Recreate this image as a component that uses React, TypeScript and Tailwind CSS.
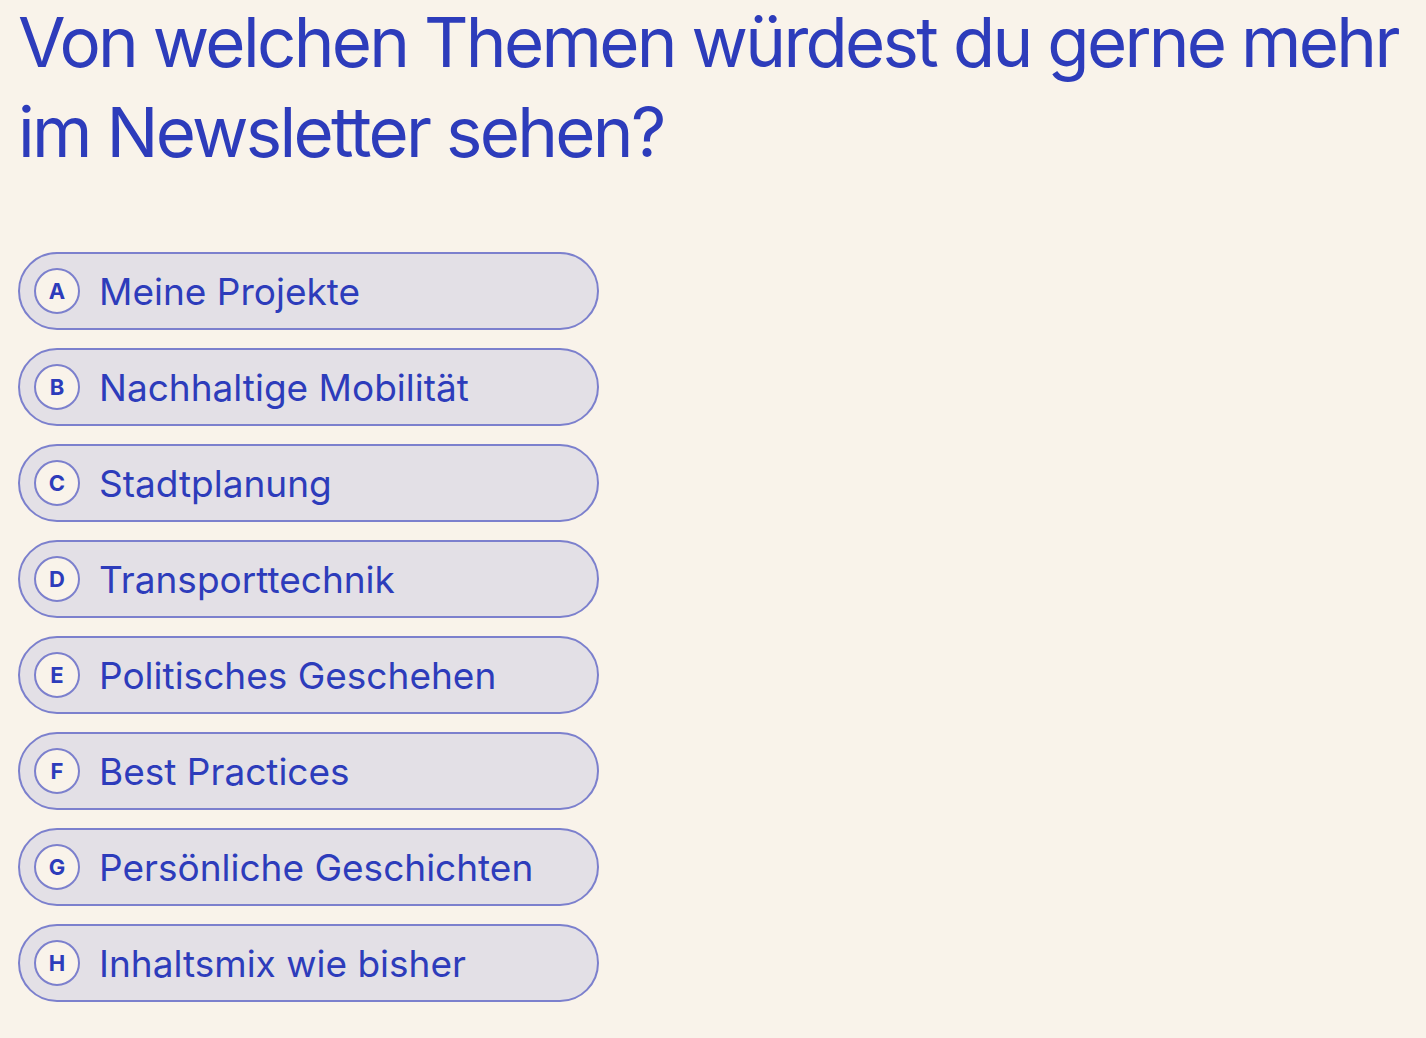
import React from "react";

const options = [
  ["A", "Meine Projekte"],
  ["B", "Nachhaltige Mobilität"],
  ["C", "Stadtplanung"],
  ["D", "Transporttechnik"],
  ["E", "Politisches Geschehen"],
  ["F", "Best Practices"],
  ["G", "Persönliche Geschichten"],
  ["H", "Inhaltsmix wie bisher"],
];

export default function App() {
  return (
    <div
      className="flow-root min-h-[1038px] w-full bg-[#f9f3ea] text-[#2d3cbb]"
      style={{ fontFamily: "Inter, 'Noto Sans', sans-serif" }}
    >
      <div className="flow-root pl-[18px]">
        <h1 className="whitespace-nowrap text-[69px] leading-[90px] font-normal tracking-[-2.7px] -mt-[3px]">
          Von welchen Themen würdest du gerne mehr
          <br />
          im Newsletter sehen?
        </h1>
        <div className="mt-[75px] flex flex-col gap-[18px] w-[581px]">
          {options.map(([k, label]) => (
            <div
              key={k}
              className="flex h-[78px] items-center rounded-full border-2 border-[#7c80cd] bg-[#e3e0e6] pl-[14px]"
            >
              <div className="flex h-[46px] w-[46px] shrink-0 items-center justify-center rounded-full border-2 border-[#7c80cd] bg-[#f9f3ea] text-[22px] font-bold">
                {k}
              </div>
              <span className="ml-[19px] text-[37px] leading-none">{label}</span>
            </div>
          ))}
        </div>
      </div>
    </div>
  );
}
